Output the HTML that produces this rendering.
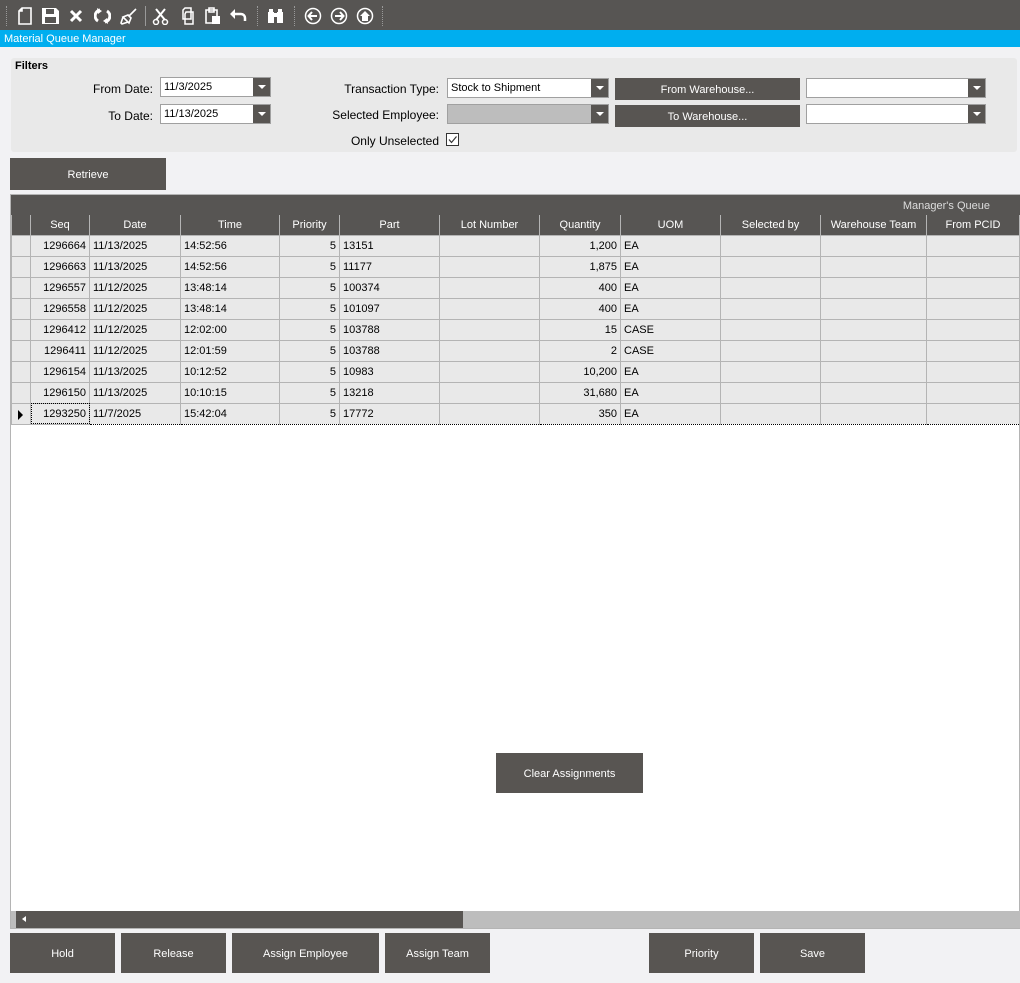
<!DOCTYPE html>
<html><head><style>
*{box-sizing:border-box;margin:0;padding:0}
body{width:1020px;height:983px;background:#f2f2f4;font-family:"Liberation Sans",Arial,sans-serif;font-size:11px;color:#000;position:relative;overflow:hidden}
.a{position:absolute}
.tb{left:0;top:0;width:1020px;height:30px;background:#575553}
.blue{left:0;top:30px;width:1020px;height:17px;background:#00aeef;color:#fff;font-size:11px;padding:3px 0 0 4px}
.btn{position:absolute;background:#585552;color:#fff;font-size:11px;display:flex;align-items:center;justify-content:center;padding-top:2px}
.lbl{position:absolute;font-size:12px;text-align:right}
.inp{position:absolute;background:#fff;border:1px solid #a0a0a0;height:20px;font-size:11px;padding:3px 0 0 3px}
.dd{position:absolute;right:0;top:0;width:17px;height:18px;background:#585552}
.dd:after{content:"";position:absolute;left:5px;top:7px;border-left:4px solid transparent;border-right:4px solid transparent;border-top:4px solid #fff}
.sep{position:absolute;top:6px;width:1px;height:20px;border-left:1px dotted #999}
svg{position:absolute}
table{border-collapse:collapse;table-layout:fixed;position:absolute;left:11px;top:215px;width:1008px}
td{height:21px;border:1px solid #b4b4b4;background:#e9e9e9;padding:0 3px;white-space:nowrap;overflow:hidden;font-size:11px;vertical-align:middle}
th{height:20px;background:#575553;color:#fff;font-weight:normal;border:1px solid #b4b4b4;border-top:none;font-size:11px;padding-top:1px}
.r{text-align:right}
</style></head><body>
<div class="a tb">
<div class="sep" style="left:6px"></div>
<svg style="left:17px;top:7px" width="16" height="18" viewBox="0 0 16 18"><path d="M5 1h9v16H2V4z M5 1v3H2" fill="none" stroke="#fff" stroke-width="1.6"/></svg>
<svg style="left:42px;top:8px" width="17" height="16" viewBox="0 0 17 16"><path d="M0 0h14l3 3v13H0z" fill="#fff"/><rect x="4" y="1" width="8" height="5" fill="#575553"/><rect x="3" y="9" width="11" height="6" fill="#575553"/></svg>
<svg style="left:69px;top:9px" width="14" height="14" viewBox="0 0 14 14"><path d="M2 2l10 10M12 2L2 12" stroke="#fff" stroke-width="3"/></svg>
<svg style="left:94px;top:8px" width="17" height="16" viewBox="0 0 17 16"><path d="M6 2A6 6 0 0 0 4 13M11 14A6 6 0 0 0 13 3" fill="none" stroke="#fff" stroke-width="3"/><path d="M3 0l5 3-4 3zM14 16l-5-3 4-3z" fill="#fff"/></svg>
<svg style="left:120px;top:8px" width="17" height="17" viewBox="0 0 17 17"><path d="M16 1L9 8M3 9l5-2 3 3-2 5-6-6zM3 9l-2 6 1 1 6-2" fill="none" stroke="#fff" stroke-width="1.6"/></svg>
<div class="sep" style="left:145px;border-left:1px solid #999"></div>
<svg style="left:152px;top:8px" width="17" height="17" viewBox="0 0 17 17"><path d="M4 1l9 11M13 1L4 12" stroke="#fff" stroke-width="2"/><circle cx="4" cy="14" r="2.5" fill="none" stroke="#fff" stroke-width="1.5"/><circle cx="13" cy="14" r="2.5" fill="none" stroke="#fff" stroke-width="1.5"/></svg>
<svg style="left:180px;top:7px" width="15" height="18" viewBox="0 0 15 18"><path d="M5 1h6v11H3V3zM6 5h7v12H5V7z" fill="none" stroke="#fff" stroke-width="1.5"/></svg>
<svg style="left:205px;top:7px" width="16" height="18" viewBox="0 0 16 18"><path d="M1 3h11v13H1z M4 1h5v4H4z" fill="none" stroke="#fff" stroke-width="1.6"/><rect x="7" y="9" width="8" height="8" fill="#fff"/></svg>
<svg style="left:230px;top:9px" width="17" height="13" viewBox="0 0 17 13"><path d="M4 5h7a4 4 0 0 1 4 4v3" fill="none" stroke="#fff" stroke-width="2.5"/><path d="M0 5l5-5v10z" fill="#fff"/></svg>
<div class="sep" style="left:257px"></div>
<svg style="left:267px;top:8px" width="17" height="16" viewBox="0 0 17 16"><rect x="1" y="4" width="6" height="11" fill="#fff"/><rect x="10" y="4" width="6" height="11" fill="#fff"/><rect x="2" y="1" width="4" height="3" fill="#fff"/><rect x="11" y="1" width="4" height="3" fill="#fff"/><rect x="6" y="5" width="5" height="4" fill="#fff"/></svg>
<div class="sep" style="left:294px"></div>
<svg style="left:304px;top:7px" width="18" height="18" viewBox="0 0 18 18"><circle cx="9" cy="9" r="7.5" fill="none" stroke="#fff" stroke-width="1.5"/><path d="M13 9H5M8 5L4.5 9 8 13" fill="none" stroke="#fff" stroke-width="2"/></svg>
<svg style="left:330px;top:7px" width="18" height="18" viewBox="0 0 18 18"><circle cx="9" cy="9" r="7.5" fill="none" stroke="#fff" stroke-width="1.5"/><path d="M5 9h8M10 5l3.5 4-3.5 4" fill="none" stroke="#fff" stroke-width="2"/></svg>
<svg style="left:356px;top:7px" width="18" height="18" viewBox="0 0 18 18"><circle cx="9" cy="9" r="7.5" fill="none" stroke="#fff" stroke-width="1.5"/><path d="M9 4l-5 5h2v5h6V9h2z" fill="#fff"/></svg>
<div class="sep" style="left:382px"></div>
</div>
<div class="a blue">Material Queue Manager</div>

<div class="a" style="left:11px;top:58px;width:1006px;height:94px;background:#e9e9e9;border-radius:3px"></div>
<div class="a" style="left:15px;top:60px;font-weight:bold;font-size:11px">Filters</div>
<div class="lbl" style="left:60px;top:82px;width:93px">From Date:</div>
<div class="inp" style="left:160px;top:77px;width:111px">11/3/2025<div class="dd"></div></div>
<div class="lbl" style="left:60px;top:109px;width:93px">To Date:</div>
<div class="inp" style="left:160px;top:104px;width:111px">11/13/2025<div class="dd"></div></div>
<div class="lbl" style="left:300px;top:82px;width:139px">Transaction Type:</div>
<div class="inp" style="left:447px;top:78px;width:162px">Stock to Shipment<div class="dd"></div></div>
<div class="lbl" style="left:300px;top:108px;width:139px">Selected Employee:</div>
<div class="inp" style="left:447px;top:104px;width:162px;background:#bdbdbd">&nbsp;<div class="dd"></div></div>
<div class="lbl" style="left:300px;top:134px;width:139px">Only Unselected</div>
<svg style="left:446px;top:133px" width="14" height="14" viewBox="0 0 14 14"><rect x="0.5" y="0.5" width="12" height="12" fill="#fff" stroke="#333"/><path d="M3 6.5l2.5 3 5-6" fill="none" stroke="#333" stroke-width="1.2"/></svg>
<div class="btn" style="left:615px;top:78px;width:185px;height:22px">From Warehouse...</div>
<div class="btn" style="left:615px;top:105px;width:185px;height:22px">To Warehouse...</div>
<div class="inp" style="left:806px;top:78px;width:180px">&nbsp;<div class="dd"></div></div>
<div class="inp" style="left:806px;top:104px;width:180px">&nbsp;<div class="dd"></div></div>

<div class="btn" style="left:10px;top:158px;width:156px;height:32px">Retrieve</div>

<div class="a" style="left:10px;top:194px;width:1010px;height:735px;background:#fff;border:1px solid #b4b4b4"></div>
<div class="a" style="left:11px;top:195px;width:1009px;height:20px;background:#575553;color:#ddd;text-align:right;padding:5px 30px 0 0">Manager's Queue</div>
<table>
<colgroup><col style="width:19px"><col style="width:59px"><col style="width:91px"><col style="width:99px"><col style="width:60px"><col style="width:100px"><col style="width:100px"><col style="width:81px"><col style="width:100px"><col style="width:100px"><col style="width:106px"><col style="width:93px"></colgroup>
<tr><th></th><th>Seq</th><th>Date</th><th>Time</th><th>Priority</th><th>Part</th><th>Lot Number</th><th>Quantity</th><th>UOM</th><th>Selected by</th><th>Warehouse Team</th><th>From PCID</th></tr>
<tr><td></td><td class="r">1296664</td><td>11/13/2025</td><td>14:52:56</td><td class="r">5</td><td>13151</td><td></td><td class="r">1,200</td><td>EA</td><td></td><td></td><td></td></tr>
<tr><td></td><td class="r">1296663</td><td>11/13/2025</td><td>14:52:56</td><td class="r">5</td><td>11177</td><td></td><td class="r">1,875</td><td>EA</td><td></td><td></td><td></td></tr>
<tr><td></td><td class="r">1296557</td><td>11/12/2025</td><td>13:48:14</td><td class="r">5</td><td>100374</td><td></td><td class="r">400</td><td>EA</td><td></td><td></td><td></td></tr>
<tr><td></td><td class="r">1296558</td><td>11/12/2025</td><td>13:48:14</td><td class="r">5</td><td>101097</td><td></td><td class="r">400</td><td>EA</td><td></td><td></td><td></td></tr>
<tr><td></td><td class="r">1296412</td><td>11/12/2025</td><td>12:02:00</td><td class="r">5</td><td>103788</td><td></td><td class="r">15</td><td>CASE</td><td></td><td></td><td></td></tr>
<tr><td></td><td class="r">1296411</td><td>11/12/2025</td><td>12:01:59</td><td class="r">5</td><td>103788</td><td></td><td class="r">2</td><td>CASE</td><td></td><td></td><td></td></tr>
<tr><td></td><td class="r">1296154</td><td>11/13/2025</td><td>10:12:52</td><td class="r">5</td><td>10983</td><td></td><td class="r">10,200</td><td>EA</td><td></td><td></td><td></td></tr>
<tr><td></td><td class="r">1296150</td><td>11/13/2025</td><td>10:10:15</td><td class="r">5</td><td>13218</td><td></td><td class="r">31,680</td><td>EA</td><td></td><td></td><td></td></tr>
<tr><td style="position:relative"><span style="position:absolute;left:6px;top:6px;border-top:5px solid transparent;border-bottom:5px solid transparent;border-left:5px solid #000"></span></td><td class="r" style="outline:1px dotted #000;outline-offset:-1px">1293250</td><td style="border-bottom:1px dotted #000">11/7/2025</td><td style="border-bottom:1px dotted #000">15:42:04</td><td class="r" style="border-bottom:1px dotted #000">5</td><td style="border-bottom:1px dotted #000">17772</td><td style="border-bottom:1px dotted #000"></td><td class="r" style="border-bottom:1px dotted #000">350</td><td style="border-bottom:1px dotted #000">EA</td><td style="border-bottom:1px dotted #000"></td><td style="border-bottom:1px dotted #000"></td><td style="border-bottom:1px dotted #000"></td></tr>
</table>

<div class="btn" style="left:496px;top:753px;width:147px;height:40px">Clear Assignments</div>

<div class="a" style="left:11px;top:911px;width:1009px;height:17px;background:#bdbdbd"></div>
<div class="a" style="left:16px;top:911px;width:447px;height:17px;background:#585552"></div>
<div class="a" style="left:22px;top:916px;border-top:3px solid transparent;border-bottom:3px solid transparent;border-right:4px solid #fff"></div>

<div class="btn" style="left:10px;top:933px;width:105px;height:40px">Hold</div>
<div class="btn" style="left:121px;top:933px;width:105px;height:40px">Release</div>
<div class="btn" style="left:232px;top:933px;width:147px;height:40px">Assign Employee</div>
<div class="btn" style="left:385px;top:933px;width:105px;height:40px">Assign Team</div>
<div class="btn" style="left:649px;top:933px;width:105px;height:40px">Priority</div>
<div class="btn" style="left:760px;top:933px;width:105px;height:40px">Save</div>
</body></html>
